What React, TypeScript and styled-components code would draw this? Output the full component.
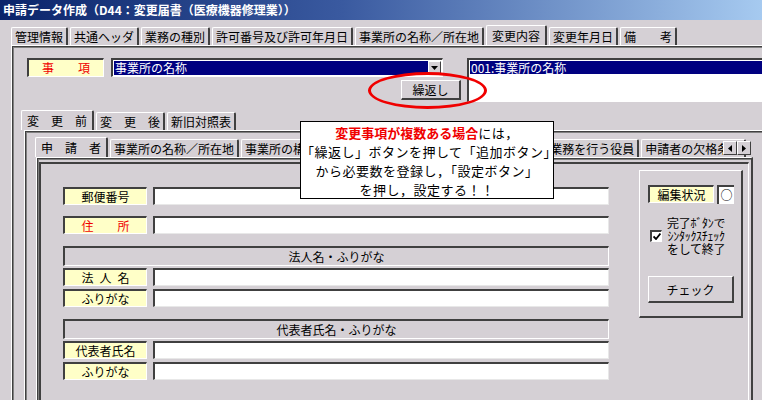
import React from 'react';
import styled, { createGlobalStyle } from 'styled-components';

const BG = '#d5d0d5';
const DARK = '#404040';

const GlobalStyle = createGlobalStyle`
  html, body { margin: 0; padding: 0; background: ${BG}; }
  body {
    font-family: "Noto Sans CJK JP", "Noto Sans", sans-serif;
    font-size: 12px;
    color: #000;
  }
  * { box-sizing: border-box; }
`;

const Window = styled.div`
  width: 762px;
  height: 400px;
  overflow: hidden;
  position: relative;
  background: ${BG};
  display: flex;
  flex-direction: column;
`;

const TitleBar = styled.div`
  flex: none;
  height: 20px;
  background: linear-gradient(to right, #0a246a 0%, #3a5aa0 45%, #a6caf0 100%);
  color: #fff;
  font-weight: bold;
  font-size: 12px;
  line-height: 20px;
  padding-left: 3px;
  white-space: nowrap;
`;

const Body = styled.div`
  flex: 1;
  padding: 5px 0 0 11px;
  display: flex;
  flex-direction: column;
  min-height: 0;
`;

const TabSet = styled.div<{ $panelOffset: number }>`
  display: flex;
  flex-direction: column;
  position: relative;
  --panel-offset: ${p => p.$panelOffset}px;
`;

const TabRow = styled.div`
  display: flex;
  align-items: flex-end;
  gap: 2px;
  height: 20px;
  flex: none;
  white-space: nowrap;
`;

const Tab = styled.div<{ $active?: boolean }>`
  flex: none;
  height: ${p => (p.$active ? 20 : 18)}px;
  line-height: ${p => (p.$active ? 19 : 17)}px;
  padding: 0 ${p => (p.$active ? 5 : 3)}px;
  border-top: 1px solid #fff;
  border-left: 1px solid #fff;
  border-right: 2px solid ${DARK};
  border-radius: 2px 2px 0 0;
  background: ${BG};
  white-space: nowrap;
`;

const Panel = styled.div<{ $width?: number }>`
  margin-left: var(--panel-offset);
  border-top: 1px solid #fff;
  border-left: 1px solid #fff;
  ${p => (p.$width ? `width: ${p.$width}px; border-right: 2px solid ${DARK};` : 'width: 900px;')}
  box-shadow: inset 1px 1px 0 ${DARK}, inset 2px 2px 0 #808080;
  flex: none;
  height: 600px;
`;

const TopPanelInner = styled.div`
  padding: 12px 0 0 9px;
  display: flex;
  flex-direction: column;
`;

const TopRow = styled.div`
  display: flex;
  align-items: flex-start;
  gap: 24px;
  padding-left: 6px;
`;

const LeftCol = styled.div`
  width: 416px;
  display: flex;
  flex-direction: column;
`;

const FieldLine = styled.div`
  display: flex;
  gap: 7px;
`;

const Label = styled.div<{ $w: number; $h?: number; $red?: boolean }>`
  width: ${p => p.$w}px;
  height: ${p => p.$h ?? 19}px;
  line-height: ${p => (p.$h ?? 19) - 3}px;
  background: #ffffc8;
  border-top: 2px solid ${DARK};
  border-left: 2px solid ${DARK};
  border-bottom: 1px solid #fff;
  border-right: 1px solid #fff;
  color: ${p => (p.$red ? '#f00000' : '#000')};
  text-align: center;
  white-space: pre;
  flex: none;
`;

const Combo = styled.div`
  width: 332px;
  height: 19px;
  border-top: 2px solid ${DARK};
  border-left: 2px solid ${DARK};
  border-bottom: 1px solid #fff;
  border-right: 1px solid #fff;
  background: #fff;
  display: flex;
  padding: 1px;
`;

const ComboText = styled.div`
  flex: 1;
  background: #000080;
  color: #fff;
  line-height: 14px;
  padding-left: 1px;
`;

const DropButton = styled.div`
  width: 13px;
  background: ${BG};
  border-top: 1px solid #fff;
  border-left: 1px solid #fff;
  border-right: 1px solid ${DARK};
  border-bottom: 1px solid ${DARK};
  display: flex;
  align-items: center;
  justify-content: center;
`;

const Button = styled.div<{ $w: number; $h: number }>`
  width: ${p => p.$w}px;
  height: ${p => p.$h}px;
  background: ${BG};
  border-top: 1px solid #fff;
  border-left: 1px solid #fff;
  border-right: 2px solid ${DARK};
  border-bottom: 2px solid ${DARK};
  display: flex;
  align-items: center;
  justify-content: center;
  flex: none;
`;

const RepeatWrap = styled.div`
  margin: 3px 0 0 374px;
`;

const ListBox = styled.div`
  width: 320px;
  height: 44px;
  border-top: 2px solid ${DARK};
  border-left: 2px solid ${DARK};
  border-bottom: 1px solid #fff;
  background: #fff;
  padding: 1px 0 0 1px;
`;

const ListItem = styled.div`
  background: #000080;
  color: #fff;
  height: 13px;
  line-height: 13px;
  padding-left: 1px;
`;

const SubArea = styled.div`
  margin-top: 8px;
`;

const Panel2Inner = styled.div`
  padding: 6px 0 0 10px;
`;

const ArrowGroup = styled.div`
  position: absolute;
  left: 688px;
  top: 4px;
  display: flex;
  z-index: 3;
`;

const ArrowBtn = styled.div`
  width: 14px;
  height: 14px;
  background: ${BG};
  border-top: 1px solid #fff;
  border-left: 1px solid #fff;
  border-right: 1px solid ${DARK};
  border-bottom: 1px solid ${DARK};
  display: flex;
  align-items: center;
  justify-content: center;
`;

const Panel3Inner = styled.div`
  padding: 4px 2px 0 2px;
`;

const InnerBox = styled.div`
  border-top: 2px solid ${DARK};
  border-left: 2px solid ${DARK};
  border-right: 1px solid #fff;
  height: 300px;
  display: flex;
  align-items: flex-start;
  gap: 30px;
  padding: 6px 0 0 22px;
`;

const Form = styled.div`
  width: 546px;
  margin-top: 17px;
  display: flex;
  flex-direction: column;
`;

const FormRow = styled.div<{ $gap: number }>`
  display: grid;
  grid-template-columns: 84px 456px;
  column-gap: 6px;
  margin-top: ${p => p.$gap}px;
`;

const Input = styled.div`
  height: 18px;
  background: #fff;
  border-top: 2px solid ${DARK};
  border-left: 2px solid ${DARK};
  border-bottom: 1px solid #e8e8e8;
  border-right: 1px solid #e8e8e8;
`;

const Header = styled.div<{ $gap: number }>`
  margin-top: ${p => p.$gap}px;
  height: 20px;
  border-top: 2px solid ${DARK};
  border-left: 2px solid ${DARK};
  border-bottom: 1px solid #fff;
  border-right: 1px solid #fff;
  text-align: center;
  line-height: 17px;
`;

const Group = styled.div`
  width: 104px;
  height: 148px;
  border-top: 1px solid #fff;
  border-left: 1px solid #fff;
  border-right: 2px solid ${DARK};
  border-bottom: 2px solid ${DARK};
  display: flex;
  flex-direction: column;
  padding: 14px 0 0 8px;
`;

const StatusRow = styled.div`
  display: flex;
  gap: 3px;
`;

const StatusMark = styled.div`
  width: 17px;
  height: 19px;
  background: #fff;
  border-top: 2px solid ${DARK};
  border-left: 2px solid ${DARK};
  line-height: 16px;
  text-align: center;
  font-size: 12px;
  overflow: hidden;
`;

const CheckRow = styled.div`
  display: flex;
  align-items: center;
  gap: 5px;
  margin: 12px 0 0 2px;
`;

const CheckBox = styled.div`
  width: 12px;
  height: 12px;
  background: #fff;
  border-top: 2px solid ${DARK};
  border-left: 2px solid ${DARK};
  border-right: 1px solid #fff;
  border-bottom: 1px solid #fff;
  display: flex;
  align-items: center;
  justify-content: center;
  flex: none;
`;

const CheckText = styled.div`
  font-size: 12px;
  line-height: 13px;
  text-align: center;
  white-space: nowrap;
  letter-spacing: -0.3px;
`;

const CheckBtnWrap = styled.div`
  margin-top: 21px;
`;

const Callout = styled.div`
  position: absolute;
  left: 300px;
  top: 121px;
  width: 254px;
  height: 78px;
  background: #fff;
  border: 1px solid #000;
  z-index: 5;
  text-align: center;
  font-size: 13px;
  letter-spacing: 0.5px;
  line-height: 19px;
  padding-top: 1px;
  white-space: nowrap;
`;

const RedStrong = styled.span`
  color: #f00000;
  font-weight: bold;
  letter-spacing: 0;
`;

const Ellipse = styled.div`
  position: absolute;
  left: 368px;
  top: 72px;
  width: 119px;
  height: 37px;
  border: 3px solid #f00000;
  border-radius: 50%;
  z-index: 6;
  pointer-events: none;
`;

const topTabs = ['管理情報', '共通ヘッダ', '業務の種別', '許可番号及び許可年月日', '事業所の名称／所在地', '変更内容', '変更年月日', '備　　考'];
const subTabs = ['変　更　前', '変　更　後', '新旧対照表'];
const innerTabs = ['申　請　者', '事業所の名称／所在地', '事業所の構造設備', '責任技術者の氏名', '修理区分(範囲)', '業務を行う役員', '申請者の欠格条項'];

const Tri = ({ dir }: { dir: 'down' | 'left' | 'right' }) => {
  const pts = dir === 'down' ? '0,0 7,0 3.5,4' : dir === 'left' ? '4,0 4,7 0,3.5' : '0,0 0,7 4,3.5';
  const w = dir === 'down' ? 7 : 4;
  const h = dir === 'down' ? 4 : 7;
  return (
    <svg width={w} height={h} viewBox={`0 0 ${w} ${h}`}>
      <polygon points={pts} fill="#000" />
    </svg>
  );
};

export default function App() {
  return (
    <>
      <GlobalStyle />
      <Window>
        <TitleBar>申請データ作成（D44：変更届書（医療機器修理業））</TitleBar>
        <Body>
          <TabSet $panelOffset={0}>
            <TabRow>
              {topTabs.map(t => (
                <Tab key={t} $active={t === '変更内容'}>{t}</Tab>
              ))}
            </TabRow>
            <Panel>
              <TopPanelInner>
                <TopRow>
                  <LeftCol>
                    <FieldLine>
                      <Label $w={77} $red>事　　項</Label>
                      <Combo>
                        <ComboText>事業所の名称</ComboText>
                        <DropButton><Tri dir="down" /></DropButton>
                      </Combo>
                    </FieldLine>
                    <RepeatWrap>
                      <Button $w={60} $h={20}>繰返し</Button>
                    </RepeatWrap>
                  </LeftCol>
                  <ListBox>
                    <ListItem>001:事業所の名称</ListItem>
                  </ListBox>
                </TopRow>
                <SubArea>
                  <TabSet $panelOffset={3}>
                    <TabRow>
                      {subTabs.map((t, i) => (
                        <Tab key={t} $active={i === 0}>{t}</Tab>
                      ))}
                    </TabRow>
                    <Panel>
                      <Panel2Inner>
                        <TabSet $panelOffset={1}>
                          <TabRow>
                            {innerTabs.map((t, i) => (
                              <Tab key={t} $active={i === 0}>{t}</Tab>
                            ))}
                          </TabRow>
                          <ArrowGroup>
                            <ArrowBtn><Tri dir="left" /></ArrowBtn>
                            <ArrowBtn><Tri dir="right" /></ArrowBtn>
                          </ArrowGroup>
                          <Panel $width={717}>
                            <Panel3Inner>
                              <InnerBox>
                                <Form>
                                  <FormRow $gap={0}>
                                    <Label $w={84} $h={18}>郵便番号</Label>
                                    <Input />
                                  </FormRow>
                                  <FormRow $gap={11}>
                                    <Label $w={84} $h={18} $red>住　　所</Label>
                                    <Input />
                                  </FormRow>
                                  <Header $gap={12}>法人名・ふりがな</Header>
                                  <FormRow $gap={2}>
                                    <Label $w={84} $h={18}>{'法\u2002人\u2002名'}</Label>
                                    <Input />
                                  </FormRow>
                                  <FormRow $gap={3}>
                                    <Label $w={84} $h={18}>ふりがな</Label>
                                    <Input />
                                  </FormRow>
                                  <Header $gap={12}>代表者氏名・ふりがな</Header>
                                  <FormRow $gap={2}>
                                    <Label $w={84} $h={18}>代表者氏名</Label>
                                    <Input />
                                  </FormRow>
                                  <FormRow $gap={3}>
                                    <Label $w={84} $h={18}>ふりがな</Label>
                                    <Input />
                                  </FormRow>
                                </Form>
                                <Group>
                                  <StatusRow>
                                    <Label $w={66} $h={18}>編集状況</Label>
                                    <StatusMark>○</StatusMark>
                                  </StatusRow>
                                  <CheckRow>
                                    <CheckBox>
                                      <svg width="8" height="7" viewBox="0 0 8 7">
                                        <polyline points="0.5,3.5 3,6 7.5,0.5" fill="none" stroke="#000" strokeWidth="1.8" />
                                      </svg>
                                    </CheckBox>
                                    <CheckText>
                                      完了ﾎﾞﾀﾝで<br />ｼﾝﾀｯｸｽﾁｪｯｸ<br />をして終了
                                    </CheckText>
                                  </CheckRow>
                                  <CheckBtnWrap>
                                    <Button $w={86} $h={27}>チェック</Button>
                                  </CheckBtnWrap>
                                </Group>
                              </InnerBox>
                            </Panel3Inner>
                          </Panel>
                        </TabSet>
                      </Panel2Inner>
                    </Panel>
                  </TabSet>
                </SubArea>
              </TopPanelInner>
            </Panel>
          </TabSet>
        </Body>
        <Ellipse />
        <Callout>
          <RedStrong>変更事項が複数ある場合</RedStrong>には，<br />
          「繰返し」ボタンを押して「追加ボタン」<br />
          から必要数を登録し，「設定ボタン」<br />
          を押し，設定する！！
        </Callout>
      </Window>
    </>
  );
}
